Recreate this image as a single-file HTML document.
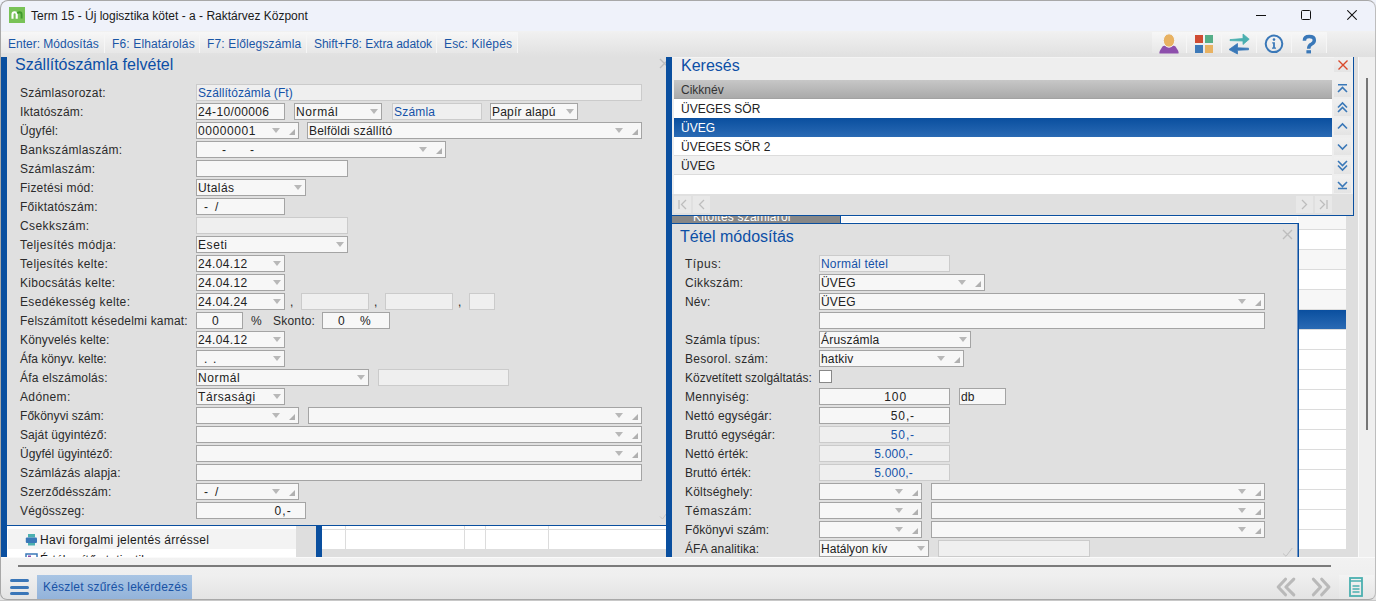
<!DOCTYPE html>
<html><head><meta charset="utf-8"><style>
*{box-sizing:border-box;margin:0;padding:0}
html,body{width:1376px;height:601px;overflow:hidden;background:#f0f0f0;font-family:"Liberation Sans",sans-serif;font-size:12px;color:#333}
.a{position:absolute}
.lbl{position:absolute;font-size:12px;color:#2b2b2b;white-space:nowrap;line-height:14px;letter-spacing:0.2px}
.in{position:absolute;height:17px;border:1px solid #a4a4a4;background:#f7f7f7;font-size:12px;line-height:15px;padding-top:1px;white-space:nowrap;color:#222;letter-spacing:0.2px}
.ro{border-color:#cbcbcb;background:#efefef}
.dd{position:absolute;width:0;height:0;border-left:4px solid transparent;border-right:4px solid transparent;border-top:5px solid #b8b8b8}
.cr{position:absolute;width:0;height:0;border-left:6px solid transparent;border-bottom:6px solid #b0b0b0}
.pt{position:absolute;font-size:16px;color:#0c4fa6;white-space:nowrap;line-height:18px}
.tbb{position:absolute;top:32px;height:21px;background:linear-gradient(#f7f7f7,#e7e7e7);color:#1d5ea9;font-size:12px;line-height:25px;white-space:nowrap}
.ib{position:absolute;top:32px;height:21px;width:35px;background:linear-gradient(#f7f7f7,#e7e7e7)}
.row{position:absolute;font-size:12px;white-space:nowrap;line-height:21px;color:#222}
.nb{position:absolute;width:17px;height:17px;background:linear-gradient(#f0f0f0,#e4e4e4)}
</style></head><body>
<div class="a" style="left:0px;top:0px;width:1376px;height:601px;background:#f0f0f0"></div>
<div class="a" style="left:0px;top:0px;width:1376px;height:31px;background:#eff2fa"></div>
<div class="a" style="left:9px;top:7px;width:16px;height:16px;background:#78c257"></div>
<svg class="a" style="left:9px;top:7px" width="16" height="16"><path d="M3.5 11.8 V7.2 Q3.5 5.2 5.6 5.2 Q7.7 5.2 7.7 7.2 V11.8" stroke="#fff" stroke-width="2.1" fill="none"/><path d="M8.2 6.4 Q9 5.2 10.5 5.2 Q12.6 5.2 12.6 7.4 V11.6" stroke="#3f9a2c" stroke-width="1.9" fill="none"/></svg>
<div class="lbl" style="left:31px;top:9px;color:#1a1a1a;font-size:12px;letter-spacing:0">Term 15 - Új logisztika kötet - a - Raktárvez Központ</div>
<div class="a" style="left:1256px;top:15px;width:10px;height:1px;background:#111"></div>
<div class="a" style="left:1301px;top:10px;width:10px;height:10px;border:1px solid #111;border-radius:1.5px"></div>
<svg class="a" style="left:1347px;top:10px" width="10" height="10"><path d="M0.3 0.3 L9.7 9.7 M9.7 0.3 L0.3 9.7" stroke="#111" stroke-width="1.05"/></svg>
<div class="a" style="left:0px;top:31px;width:1376px;height:26px;background:linear-gradient(#f1f1f1,#e0e0e0)"></div>
<div class="tbb" style="left:0px;width:105px;border-right:1px solid #f6f6f6"></div>
<div class="lbl" style="left:8px;top:37px;color:#1a56a6;letter-spacing:0.0px">Enter: Módosítás</div>
<div class="tbb" style="left:105px;width:95px;border-right:1px solid #f6f6f6"></div>
<div class="lbl" style="left:112px;top:37px;color:#1a56a6;letter-spacing:0.14px">F6: Elhatárolás</div>
<div class="tbb" style="left:200px;width:107px;border-right:1px solid #f6f6f6"></div>
<div class="lbl" style="left:207px;top:37px;color:#1a56a6;letter-spacing:0.14px">F7: Előlegszámla</div>
<div class="tbb" style="left:307px;width:130px;border-right:1px solid #f6f6f6"></div>
<div class="lbl" style="left:314px;top:37px;color:#1a56a6;letter-spacing:-0.05px">Shift+F8: Extra adatok</div>
<div class="tbb" style="left:437px;width:81px;border-right:1px solid #f6f6f6"></div>
<div class="lbl" style="left:444px;top:37px;color:#1a56a6;letter-spacing:0.18px">Esc: Kilépés</div>
<div class="ib" style="left:1152px;border-right:1px solid #f6f6f6"></div>
<div class="ib" style="left:1187px;border-right:1px solid #f6f6f6"></div>
<div class="ib" style="left:1222px;border-right:1px solid #f6f6f6"></div>
<div class="ib" style="left:1257px;border-right:1px solid #f6f6f6"></div>
<div class="ib" style="left:1292px;border-right:1px solid #f6f6f6"></div>
<svg class="a" style="left:1152px;top:31px" width="35" height="26"><path d="M7.5 22.5 Q7 21.5 8 19.5 L10.5 15.5 Q11.5 14.5 13 14.8 Q17 17.5 21 14.8 Q22.5 14.5 23.5 15.5 L26 19.5 Q27 21.5 26.5 22.5 Z" fill="#8d4fac"/><ellipse cx="17" cy="9.5" rx="5.7" ry="6.7" fill="#e8b262" stroke="#f4f4f4" stroke-width="1"/></svg>
<svg class="a" style="left:1187px;top:31px" width="35" height="26"><rect x="8" y="4" width="8" height="8" fill="#cf4b31"/><rect x="18" y="4" width="8" height="8" fill="#55ae87"/><rect x="8" y="14" width="8" height="8" fill="#3d79b8"/><rect x="18" y="14" width="8" height="8" fill="#e8b262"/></svg>
<svg class="a" style="left:1222px;top:31px" width="35" height="26"><path d="M8 8.6 L21 7.5 L21 3 L27.2 8.2 L21 13.5 L21 10 L8 9.6 Z" fill="#4bb0b0" stroke="#4bb0b0" stroke-width="0.8" stroke-linejoin="round"/><path d="M26.5 17.2 L15.5 16.8 L15.5 12.5 L7 18.5 L15.5 23 L15.5 19.3 L26.5 18.8 Z" fill="#3a78b8" stroke="#3a78b8" stroke-width="0.8" stroke-linejoin="round"/></svg>
<svg class="a" style="left:1257px;top:31px" width="35" height="26"><circle cx="17" cy="12.8" r="8.3" fill="none" stroke="#3a78b8" stroke-width="2"/><circle cx="17" cy="8.6" r="1.3" fill="#3a78b8"/><path d="M15.2 11.2 H17.9 V16.6 H19 V17.8 H15 V16.6 H16.1 V12.4 H15.2 Z" fill="#3a78b8"/></svg>
<svg class="a" style="left:1292px;top:31px" width="35" height="26"><path d="M12.4 9.8 Q12.4 5.6 17.2 5.6 Q22.3 5.6 22.3 9.3 Q22.3 11.7 19.7 13 Q16.7 14.4 16.7 17.8" fill="none" stroke="#3a78b8" stroke-width="3.5"/><rect x="14.4" y="19.2" width="4.6" height="3.2" fill="#3a78b8"/></svg>
<div class="a" style="left:1298px;top:216px;width:48px;height:333px;background:#fff"></div>
<div class="a" style="left:1298px;top:549px;width:48px;height:8px;background:#dedede"></div>
<div class="a" style="left:1298px;top:209px;width:48px;height:20px;background:#f7f7f7"></div>
<div class="a" style="left:1298px;top:249px;width:48px;height:20px;background:#f7f7f7"></div>
<div class="a" style="left:1298px;top:289px;width:48px;height:20px;background:#f7f7f7"></div>
<div class="a" style="left:1298px;top:229px;width:48px;height:1px;background:#dcdcdc"></div>
<div class="a" style="left:1298px;top:249px;width:48px;height:1px;background:#dcdcdc"></div>
<div class="a" style="left:1298px;top:269px;width:48px;height:1px;background:#dcdcdc"></div>
<div class="a" style="left:1298px;top:289px;width:48px;height:1px;background:#dcdcdc"></div>
<div class="a" style="left:1298px;top:309px;width:48px;height:1px;background:#dcdcdc"></div>
<div class="a" style="left:1298px;top:329px;width:48px;height:1px;background:#dcdcdc"></div>
<div class="a" style="left:1298px;top:349px;width:48px;height:1px;background:#dcdcdc"></div>
<div class="a" style="left:1298px;top:369px;width:48px;height:1px;background:#dcdcdc"></div>
<div class="a" style="left:1298px;top:389px;width:48px;height:1px;background:#dcdcdc"></div>
<div class="a" style="left:1298px;top:409px;width:48px;height:1px;background:#dcdcdc"></div>
<div class="a" style="left:1298px;top:429px;width:48px;height:1px;background:#dcdcdc"></div>
<div class="a" style="left:1298px;top:449px;width:48px;height:1px;background:#dcdcdc"></div>
<div class="a" style="left:1298px;top:469px;width:48px;height:1px;background:#dcdcdc"></div>
<div class="a" style="left:1298px;top:489px;width:48px;height:1px;background:#dcdcdc"></div>
<div class="a" style="left:1298px;top:509px;width:48px;height:1px;background:#dcdcdc"></div>
<div class="a" style="left:1298px;top:529px;width:48px;height:1px;background:#dcdcdc"></div>
<div class="a" style="left:1298px;top:310px;width:48px;height:19px;background:linear-gradient(#0a4f9f,#2a6ab4)"></div>
<div class="a" style="left:1346px;top:57px;width:30px;height:500px;background:#dedede"></div>
<div class="a" style="left:1358px;top:57px;width:18px;height:500px;background:#efefef"></div>
<div class="a" style="left:1358px;top:57px;width:1px;height:500px;background:#fafafa"></div>
<div class="a" style="left:1366px;top:78px;width:2px;height:352px;background:#767676"></div>
<div class="a" style="left:0px;top:525px;width:668px;height:32px;background:#e0e0e0"></div>
<div class="a" style="left:7px;top:526px;width:289px;height:31px;background:#fff"></div>
<div class="a" style="left:8px;top:529px;width:288px;height:20px;background:#f3f3f3"></div>
<div class="a" style="left:296px;top:526px;width:20px;height:31px;background:#dedede"></div>
<div class="a" style="left:316px;top:526px;width:6px;height:31px;background:#0a4f9f"></div>
<div class="a" style="left:322px;top:526px;width:344px;height:31px;background:#dedede"></div>
<div class="a" style="left:322px;top:526px;width:344px;height:23px;background:#fff"></div>
<div class="a" style="left:322px;top:529px;width:344px;height:1px;background:#dcdcdc"></div>
<div class="a" style="left:345px;top:526px;width:1px;height:23px;background:#dcdcdc"></div>
<div class="a" style="left:464px;top:526px;width:1px;height:23px;background:#dcdcdc"></div>
<div class="a" style="left:485px;top:526px;width:1px;height:23px;background:#dcdcdc"></div>
<div class="a" style="left:548px;top:526px;width:1px;height:23px;background:#dcdcdc"></div>
<div class="a" style="left:0;top:549px;width:296px;height:8px;overflow:hidden"><div class="lbl" style="left:40px;top:4px;color:#1a1a1a">Értékesítő statisztika</div></div>
<svg class="a" style="left:25px;top:553px" width="13" height="4"><rect x="1" y="1" width="11" height="4" fill="none" stroke="#3a78b8" stroke-width="1.5"/><rect x="3" y="2.5" width="3" height="2" fill="#8d4fac"/></svg>
<div class="lbl" style="left:40px;top:533px;color:#1a1a1a;letter-spacing:0.27px">Havi forgalmi jelentés árréssel</div>
<div class="a" style="left:0px;top:57px;width:666px;height:468px;background:#e0e0e0"></div>
<div class="a" style="left:1px;top:57px;width:6px;height:500px;background:#0a4f9f"></div>
<div class="a" style="left:7px;top:525px;width:660px;height:1px;background:#0a4f9f"></div>
<div class="pt" style="left:15px;top:56px">Szállítószámla felvétel</div>
<svg class="a" style="left:659px;top:512px" width="8" height="8"><path d="M1 4.5 L3.5 7 L7.5 1.5" fill="none" stroke="#c6c6c6" stroke-width="1"/></svg>
<svg class="a" style="left:659px;top:58px" width="11" height="11"><path d="M1 1 L10 10 M10 1 L1 10" stroke="#bdbdbd" stroke-width="1.4"/></svg>
<div class="lbl" style="left:20px;top:86px;letter-spacing:0.223px">Számlasorozat:</div>
<div class="lbl" style="left:20px;top:105px;letter-spacing:0.200px">Iktatószám:</div>
<div class="lbl" style="left:20px;top:124px;letter-spacing:0.133px">Ügyfél:</div>
<div class="lbl" style="left:20px;top:143px;letter-spacing:0.343px">Bankszámlaszám:</div>
<div class="lbl" style="left:20px;top:162px;letter-spacing:0.300px">Számlaszám:</div>
<div class="lbl" style="left:20px;top:181px;letter-spacing:0.200px">Fizetési mód:</div>
<div class="lbl" style="left:20px;top:200px;letter-spacing:0.242px">Főiktatószám:</div>
<div class="lbl" style="left:20px;top:219px;letter-spacing:0.422px">Csekkszám:</div>
<div class="lbl" style="left:20px;top:238px;letter-spacing:0.419px">Teljesítés módja:</div>
<div class="lbl" style="left:20px;top:257px;letter-spacing:0.369px">Teljesítés kelte:</div>
<div class="lbl" style="left:20px;top:276px;letter-spacing:0.275px">Kibocsátás kelte:</div>
<div class="lbl" style="left:20px;top:295px;letter-spacing:0.347px">Esedékesség kelte:</div>
<div class="lbl" style="left:20px;top:314px;letter-spacing:0.200px">Felszámított késedelmi kamat:</div>
<div class="lbl" style="left:20px;top:333px;letter-spacing:0.133px">Könyvelés kelte:</div>
<div class="lbl" style="left:20px;top:352px;letter-spacing:-0.031px">Áfa könyv. kelte:</div>
<div class="lbl" style="left:20px;top:371px;letter-spacing:0.200px">Áfa elszámolás:</div>
<div class="lbl" style="left:20px;top:390px;letter-spacing:0.367px">Adónem:</div>
<div class="lbl" style="left:20px;top:409px;letter-spacing:0.046px">Főkönyvi szám:</div>
<div class="lbl" style="left:20px;top:428px;letter-spacing:0.093px">Saját ügyintéző:</div>
<div class="lbl" style="left:20px;top:447px;letter-spacing:0.038px">Ügyfél ügyintéző:</div>
<div class="lbl" style="left:20px;top:466px;letter-spacing:0.200px">Számlázás alapja:</div>
<div class="lbl" style="left:20px;top:485px;letter-spacing:0.200px">Szerződésszám:</div>
<div class="lbl" style="left:20px;top:504px;letter-spacing:0.200px">Végösszeg:</div>
<div class="in ro" style="left:196px;top:84px;width:446px;height:17px;padding-left:1px;color:#1552a8;letter-spacing:0.08px;">Szállítózámla (Ft)</div>
<div class="in" style="left:196px;top:103px;width:89px;height:17px;padding-left:1px;letter-spacing:0.35px;">24-10/00006</div>
<div class="in" style="left:294px;top:103px;width:88px;height:17px;padding-left:1px;letter-spacing:0.6px;">Normál</div>
<div class="dd" style="left:370px;top:109px"></div>
<div class="in ro" style="left:392px;top:103px;width:90px;height:17px;padding-left:1px;color:#1552a8;">Számla</div>
<div class="in" style="left:490px;top:103px;width:88px;height:17px;padding-left:1px;">Papír alapú</div>
<div class="dd" style="left:566px;top:109px"></div>
<div class="in" style="left:196px;top:122px;width:103px;height:17px;padding-left:1px;letter-spacing:0.56px;">00000001</div>
<div class="dd" style="left:272px;top:128px"></div>
<div class="cr" style="left:289px;top:129px"></div>
<div class="in" style="left:307px;top:122px;width:335px;height:17px;padding-left:1px;">Belföldi szállító</div>
<div class="dd" style="left:615px;top:128px"></div>
<div class="cr" style="left:632px;top:129px"></div>
<div class="in" style="left:196px;top:141px;width:250px;height:17px;padding-left:1px;"></div>
<div class="dd" style="left:419px;top:147px"></div>
<div class="cr" style="left:436px;top:148px"></div>
<div class="lbl" style="left:222px;top:143px;color:#222">-</div>
<div class="lbl" style="left:250px;top:143px;color:#222">-</div>
<div class="in" style="left:196px;top:160px;width:152px;height:17px;padding-left:1px;"></div>
<div class="in" style="left:196px;top:179px;width:110px;height:17px;padding-left:1px;letter-spacing:0.4px;">Utalás</div>
<div class="dd" style="left:294px;top:185px"></div>
<div class="in" style="left:196px;top:198px;width:89px;height:17px;padding-left:1px;"></div>
<div class="lbl" style="left:204px;top:200px;color:#222">-</div>
<div class="lbl" style="left:215px;top:200px;color:#222">/</div>
<div class="in ro" style="left:196px;top:217px;width:152px;height:17px;padding-left:1px;"></div>
<div class="in" style="left:196px;top:236px;width:152px;height:17px;padding-left:1px;letter-spacing:0.57px;">Eseti</div>
<div class="dd" style="left:336px;top:242px"></div>
<div class="in" style="left:196px;top:255px;width:89px;height:17px;padding-left:1px;letter-spacing:0.34px;">24.04.12</div>
<div class="dd" style="left:273px;top:261px"></div>
<div class="in" style="left:196px;top:274px;width:89px;height:17px;padding-left:1px;letter-spacing:0.34px;">24.04.12</div>
<div class="dd" style="left:273px;top:280px"></div>
<div class="in" style="left:196px;top:293px;width:89px;height:17px;padding-left:1px;letter-spacing:0.34px;">24.04.24</div>
<div class="dd" style="left:273px;top:299px"></div>
<div class="lbl" style="left:290px;top:295px;">,</div>
<div class="in ro" style="left:301px;top:293px;width:68px;height:17px;padding-left:1px;"></div>
<div class="lbl" style="left:374px;top:295px;">,</div>
<div class="in ro" style="left:385px;top:293px;width:68px;height:17px;padding-left:1px;"></div>
<div class="lbl" style="left:458px;top:295px;">,</div>
<div class="in ro" style="left:469px;top:293px;width:26px;height:17px;padding-left:1px;"></div>
<div class="in" style="left:196px;top:312px;width:47px;height:17px;padding-left:15px;">0</div>
<div class="lbl" style="left:251px;top:314px;">%</div>
<div class="lbl" style="left:273px;top:314px;">Skonto:</div>
<div class="in" style="left:322px;top:312px;width:68px;height:17px;padding-left:15px;">0</div>
<div class="lbl" style="left:360px;top:314px;color:#222">%</div>
<div class="in" style="left:196px;top:331px;width:89px;height:17px;padding-left:1px;letter-spacing:0.34px;">24.04.12</div>
<div class="dd" style="left:273px;top:337px"></div>
<div class="in" style="left:196px;top:350px;width:89px;height:17px;padding-left:1px;"></div>
<div class="dd" style="left:273px;top:356px"></div>
<div class="lbl" style="left:204px;top:352px;color:#222">.</div>
<div class="lbl" style="left:213px;top:352px;color:#222">.</div>
<div class="in" style="left:196px;top:369px;width:173px;height:17px;padding-left:1px;letter-spacing:0.6px;">Normál</div>
<div class="dd" style="left:357px;top:375px"></div>
<div class="in ro" style="left:378px;top:369px;width:131px;height:17px;padding-left:1px;"></div>
<div class="in" style="left:196px;top:388px;width:89px;height:17px;padding-left:1px;letter-spacing:0.57px;">Társasági</div>
<div class="dd" style="left:273px;top:394px"></div>
<div class="in" style="left:196px;top:407px;width:103px;height:17px;padding-left:1px;"></div>
<div class="dd" style="left:272px;top:413px"></div>
<div class="cr" style="left:289px;top:414px"></div>
<div class="in" style="left:308px;top:407px;width:334px;height:17px;padding-left:1px;"></div>
<div class="dd" style="left:615px;top:413px"></div>
<div class="cr" style="left:632px;top:414px"></div>
<div class="in" style="left:196px;top:426px;width:446px;height:17px;padding-left:1px;"></div>
<div class="dd" style="left:615px;top:432px"></div>
<div class="cr" style="left:632px;top:433px"></div>
<div class="in" style="left:196px;top:445px;width:446px;height:17px;padding-left:1px;"></div>
<div class="dd" style="left:615px;top:451px"></div>
<div class="cr" style="left:632px;top:452px"></div>
<div class="in" style="left:196px;top:464px;width:446px;height:17px;padding-left:1px;"></div>
<div class="in" style="left:196px;top:483px;width:103px;height:17px;padding-left:1px;"></div>
<div class="dd" style="left:272px;top:489px"></div>
<div class="cr" style="left:289px;top:490px"></div>
<div class="lbl" style="left:204px;top:485px;color:#222">-</div>
<div class="lbl" style="left:215px;top:485px;color:#222">/</div>
<div class="in" style="left:196px;top:502px;width:110px;height:17px;text-align:right;padding-right:13px;letter-spacing:1.2px;">0,-</div>
<div class="a" style="left:666px;top:57px;width:688px;height:159px;background:#eeeeee"></div>
<div class="a" style="left:672px;top:57px;width:681px;height:1px;background:#f4f4f4"></div>
<div class="a" style="left:666px;top:57px;width:6px;height:500px;background:#0a4f9f"></div>
<div class="a" style="left:1353px;top:57px;width:1px;height:159px;background:#0a4f9f"></div>
<div class="pt" style="left:681px;top:57px">Keresés</div>
<div class="a" style="left:674px;top:80px;width:658px;height:19px;background:linear-gradient(#c7c7c7,#aaaaaa);border-bottom:1px solid #a2a2a2"></div>
<div class="row" style="left:681px;top:80px;color:#333">Cikknév</div>
<div class="a" style="left:674px;top:99px;width:658px;height:19px;background:#fff"></div>
<div class="row" style="left:681px;top:99px;color:#222">ÜVEGES SÖR</div>
<div class="a" style="left:674px;top:118px;width:658px;height:19px;background:linear-gradient(#0a4f9f,#2a6ab4)"></div>
<div class="row" style="left:681px;top:118px;color:#fff">ÜVEG</div>
<div class="a" style="left:674px;top:137px;width:658px;height:19px;background:#fff"></div>
<div class="a" style="left:674px;top:155px;width:658px;height:1px;background:#dcdcdc"></div>
<div class="row" style="left:681px;top:137px;color:#222">ÜVEGES SÖR 2</div>
<div class="a" style="left:674px;top:156px;width:658px;height:19px;background:#f0f0f0"></div>
<div class="a" style="left:674px;top:174px;width:658px;height:1px;background:#dcdcdc"></div>
<div class="row" style="left:681px;top:156px;color:#222">ÜVEG</div>
<div class="a" style="left:674px;top:175px;width:658px;height:19px;background:#fff"></div>
<div class="row" style="left:681px;top:175px;color:#222"></div>
<div class="a" style="left:672px;top:194px;width:681px;height:21px;background:#e0e0e0"></div>
<div class="nb" style="left:1334px;top:80px"></div>
<svg class="a" style="left:1334px;top:80px" width="17" height="17"><path d="M4 4.8 H13 M4 12 L8.5 7.5 L13 12" fill="none" stroke="#3a78b8" stroke-width="1.6"/></svg>
<div class="nb" style="left:1334px;top:99px"></div>
<svg class="a" style="left:1334px;top:99px" width="17" height="17"><path d="M4 8.5 L8.5 4 L13 8.5 M4 13 L8.5 8.5 L13 13" fill="none" stroke="#3a78b8" stroke-width="1.6"/></svg>
<div class="nb" style="left:1334px;top:118px"></div>
<svg class="a" style="left:1334px;top:118px" width="17" height="17"><path d="M4 10.5 L8.5 6 L13 10.5" fill="none" stroke="#3a78b8" stroke-width="1.6"/></svg>
<div class="nb" style="left:1334px;top:138px"></div>
<svg class="a" style="left:1334px;top:138px" width="17" height="17"><path d="M4 6.5 L8.5 11 L13 6.5" fill="none" stroke="#3a78b8" stroke-width="1.6"/></svg>
<div class="nb" style="left:1334px;top:157px"></div>
<svg class="a" style="left:1334px;top:157px" width="17" height="17"><path d="M4 4 L8.5 8.5 L13 4 M4 8.5 L8.5 13 L13 8.5" fill="none" stroke="#3a78b8" stroke-width="1.6"/></svg>
<div class="nb" style="left:1334px;top:176px"></div>
<svg class="a" style="left:1334px;top:176px" width="17" height="17"><path d="M4 6 L8.5 10.5 L13 6 M4 12.5 H13" fill="none" stroke="#3a78b8" stroke-width="1.6"/></svg>
<div class="nb" style="left:1334px;top:57px;height:15px"></div>
<div class="a" style="left:674px;top:196px;width:17px;height:17px;background:#e8e8e8"></div>
<svg class="a" style="left:674px;top:196px" width="17" height="17"><path d="M5 4 V13 M12 4 L7.5 8.5 L12 13" fill="none" stroke="#bdbdbd" stroke-width="1.3"/></svg>
<div class="a" style="left:693px;top:196px;width:17px;height:17px;background:#e8e8e8"></div>
<svg class="a" style="left:693px;top:196px" width="17" height="17"><path d="M11 4 L6.5 8.5 L11 13" fill="none" stroke="#bdbdbd" stroke-width="1.3"/></svg>
<div class="a" style="left:1296px;top:196px;width:17px;height:17px;background:#e8e8e8"></div>
<svg class="a" style="left:1296px;top:196px" width="17" height="17"><path d="M6 4 L10.5 8.5 L6 13" fill="none" stroke="#bdbdbd" stroke-width="1.3"/></svg>
<div class="a" style="left:1315px;top:196px;width:17px;height:17px;background:#e8e8e8"></div>
<svg class="a" style="left:1315px;top:196px" width="17" height="17"><path d="M5 4 L9.5 8.5 L5 13 M12 4 V13" fill="none" stroke="#bdbdbd" stroke-width="1.3"/></svg>
<svg class="a" style="left:1337px;top:59px" width="12" height="12"><path d="M1.5 1.5 L10.5 10.5 M10.5 1.5 L1.5 10.5" stroke="#d9492b" stroke-width="1.4"/></svg>
<div class="a" style="left:672px;top:215px;width:682px;height:1px;background:#0a4f9f"></div>
<div class="a" style="left:672px;top:216px;width:168px;height:7px;background:#878787"></div>
<div class="a" style="left:672px;top:216px;width:168px;height:7px;overflow:hidden"><div class="lbl" style="left:21px;top:-6px;color:#fff">Kitöltés számláról</div></div>
<div class="a" style="left:840px;top:216px;width:1px;height:7px;background:#0a4f9f"></div>
<div class="a" style="left:841px;top:216px;width:457px;height:7px;background:#fff"></div>
<div class="a" style="left:842px;top:217px;width:455px;height:5px;background:#f7f7f7"></div>
<div class="a" style="left:672px;top:223px;width:627px;height:1px;background:#0a4f9f"></div>
<div class="a" style="left:672px;top:223px;width:626px;height:334px;background:#e0e0e0"></div>
<div class="a" style="left:1298px;top:223px;width:1px;height:334px;background:#0a4f9f"></div>
<div class="a" style="left:1297px;top:223px;width:1px;height:334px;background:#6d93c6"></div>
<svg class="a" style="left:1282px;top:547px" width="11" height="10"><path d="M1 6.5 L4 9.3 L10.3 1" fill="none" stroke="#c2c2c2" stroke-width="1"/></svg>
<div class="a" style="left:672px;top:223px;width:626px;height:1px;background:#0a4f9f"></div>
<div class="pt" style="left:680px;top:228px">Tétel módosítás</div>
<svg class="a" style="left:1282px;top:229px" width="11" height="11"><path d="M1 1 L10 10 M10 1 L1 10" stroke="#bdbdbd" stroke-width="1.4"/></svg>
<div class="lbl" style="left:685px;top:257px;letter-spacing:0.540px">Típus:</div>
<div class="lbl" style="left:685px;top:276px;letter-spacing:0.350px">Cikkszám:</div>
<div class="lbl" style="left:685px;top:295px;letter-spacing:0.200px">Név:</div>
<div class="lbl" style="left:685px;top:333px;letter-spacing:0.200px">Számla típus:</div>
<div class="lbl" style="left:685px;top:352px;letter-spacing:0.277px">Besorol. szám:</div>
<div class="lbl" style="left:685px;top:371px;letter-spacing:0.004px">Közvetített szolgáltatás:</div>
<div class="lbl" style="left:685px;top:390px;letter-spacing:0.311px">Mennyiség:</div>
<div class="lbl" style="left:685px;top:409px;letter-spacing:0.150px">Nettó egységár:</div>
<div class="lbl" style="left:685px;top:428px;letter-spacing:0.133px">Bruttó egységár:</div>
<div class="lbl" style="left:685px;top:447px;letter-spacing:0.127px">Nettó érték:</div>
<div class="lbl" style="left:685px;top:466px;letter-spacing:0.050px">Bruttó érték:</div>
<div class="lbl" style="left:685px;top:485px;letter-spacing:0.200px">Költséghely:</div>
<div class="lbl" style="left:685px;top:504px;letter-spacing:0.475px">Témaszám:</div>
<div class="lbl" style="left:685px;top:523px;letter-spacing:0.062px">Főkönyvi szám:</div>
<div class="lbl" style="left:685px;top:542px;letter-spacing:0.115px">ÁFA analitika:</div>
<div class="in ro" style="left:819px;top:255px;width:131px;height:17px;padding-left:1px;color:#1552a8;">Normál tétel</div>
<div class="in" style="left:819px;top:274px;width:166px;height:17px;padding-left:1px;">ÜVEG</div>
<div class="dd" style="left:958px;top:280px"></div>
<div class="cr" style="left:975px;top:281px"></div>
<div class="in" style="left:819px;top:293px;width:446px;height:17px;padding-left:1px;">ÜVEG</div>
<div class="dd" style="left:1238px;top:299px"></div>
<div class="cr" style="left:1255px;top:300px"></div>
<div class="in" style="left:819px;top:312px;width:446px;height:17px;padding-left:1px;"></div>
<div class="in" style="left:819px;top:331px;width:152px;height:17px;padding-left:1px;">Áruszámla</div>
<div class="dd" style="left:959px;top:337px"></div>
<div class="in" style="left:819px;top:350px;width:145px;height:17px;padding-left:1px;">hatkiv</div>
<div class="dd" style="left:937px;top:356px"></div>
<div class="cr" style="left:954px;top:357px"></div>
<div class="a" style="left:819px;top:370px;width:13px;height:13px;background:#fff;border:1px solid #888"></div>
<div class="in" style="left:819px;top:388px;width:131px;height:17px;text-align:right;padding-right:42px;letter-spacing:0.9px;">100</div>
<div class="in" style="left:959px;top:388px;width:47px;height:17px;padding-left:1px;">db</div>
<div class="in" style="left:819px;top:407px;width:131px;height:17px;text-align:right;padding-right:34px;letter-spacing:0.87px;">50,-</div>
<div class="in ro" style="left:819px;top:426px;width:131px;height:17px;text-align:right;padding-right:34px;color:#1552a8;letter-spacing:0.87px;">50,-</div>
<div class="in ro" style="left:819px;top:445px;width:131px;height:17px;text-align:right;padding-right:36px;color:#1552a8;letter-spacing:0.2px;">5.000,-</div>
<div class="in ro" style="left:819px;top:464px;width:131px;height:17px;text-align:right;padding-right:36px;color:#1552a8;letter-spacing:0.2px;">5.000,-</div>
<div class="in" style="left:819px;top:483px;width:103px;height:17px;padding-left:1px;"></div>
<div class="dd" style="left:895px;top:489px"></div>
<div class="cr" style="left:912px;top:490px"></div>
<div class="in" style="left:931px;top:483px;width:334px;height:17px;padding-left:1px;"></div>
<div class="dd" style="left:1238px;top:489px"></div>
<div class="cr" style="left:1255px;top:490px"></div>
<div class="in" style="left:819px;top:502px;width:103px;height:17px;padding-left:1px;"></div>
<div class="dd" style="left:895px;top:508px"></div>
<div class="cr" style="left:912px;top:509px"></div>
<div class="in" style="left:931px;top:502px;width:334px;height:17px;padding-left:1px;"></div>
<div class="dd" style="left:1238px;top:508px"></div>
<div class="cr" style="left:1255px;top:509px"></div>
<div class="in" style="left:819px;top:521px;width:103px;height:17px;padding-left:1px;"></div>
<div class="dd" style="left:895px;top:527px"></div>
<div class="cr" style="left:912px;top:528px"></div>
<div class="in" style="left:931px;top:521px;width:334px;height:17px;padding-left:1px;"></div>
<div class="dd" style="left:1238px;top:527px"></div>
<div class="cr" style="left:1255px;top:528px"></div>
<div class="in" style="left:819px;top:540px;width:110px;height:17px;padding-left:1px;letter-spacing:0.02px;">Hatályon kív</div>
<div class="dd" style="left:917px;top:546px"></div>
<div class="in ro" style="left:938px;top:540px;width:152px;height:17px;padding-left:1px;"></div>
<div class="a" style="left:0px;top:557px;width:1376px;height:44px;background:linear-gradient(#f2f2f2 0px,#efefef 18px,#e3e3e3 42px)"></div>
<div class="a" style="left:0px;top:557px;width:1376px;height:1px;background:#fafafa"></div>
<div class="a" style="left:18px;top:565px;width:1313px;height:2px;background:#7b7b7b"></div>
<div class="a" style="left:37px;top:575px;width:155px;height:24px;background:linear-gradient(#a9c5e4,#93b3da)"></div>
<div class="lbl" style="left:43px;top:580px;color:#1852a5">Készlet szűrés lekérdezés</div>
<div class="a" style="left:10px;top:579.0px;width:19px;height:3px;background:#3a76b8;border-radius:1.5px"></div>
<div class="a" style="left:10px;top:585.5px;width:19px;height:3px;background:#3a76b8;border-radius:1.5px"></div>
<div class="a" style="left:10px;top:592.0px;width:19px;height:3px;background:#3a76b8;border-radius:1.5px"></div>
<svg class="a" style="left:1270px;top:570px" width="70" height="30"><path d="M15.5 9.2 L8.2 17 L15.5 24.8 M23.8 9.2 L15.9 17 L23.8 24.8 M43.4 9.2 L50.6 17 L43.4 24.8 M51.7 9.2 L58.9 17 L51.7 24.8" fill="none" stroke="#b9b9b9" stroke-width="3.1" stroke-linecap="round" stroke-linejoin="round"/></svg>
<div class="a" style="left:1339px;top:575px;width:35px;height:24px;background:linear-gradient(#f3f3f3,#e6e6e6)"></div>
<svg class="a" style="left:1349px;top:577px" width="14" height="20"><rect x="1" y="1" width="12" height="18" fill="none" stroke="#4bb0b0" stroke-width="1.8"/><path d="M1 4 H13 M3.5 9 H10.5 M3.5 12 H10.5 M3.5 15 H10.5" stroke="#4bb0b0" stroke-width="1.5"/></svg>
<svg class="a" style="left:25px;top:534px" width="13" height="12"><rect x="3" y="0" width="7" height="3.5" fill="#4bb0b0"/><rect x="0.8" y="3.5" width="11.2" height="5.5" rx="1" fill="#3a78b8"/><rect x="3" y="9" width="7" height="2.5" fill="#4bb0b0"/></svg>
<div class="a" style="left:0;top:0;width:1376px;height:600px;border:1px solid #a8a8a8;border-right-color:#bdbdbd;border-radius:8px 8px 7px 7px;pointer-events:none"></div>
<div class="a" style="left:0px;top:600px;width:1376px;height:1px;background:#c8c8c8"></div>
</body></html>
